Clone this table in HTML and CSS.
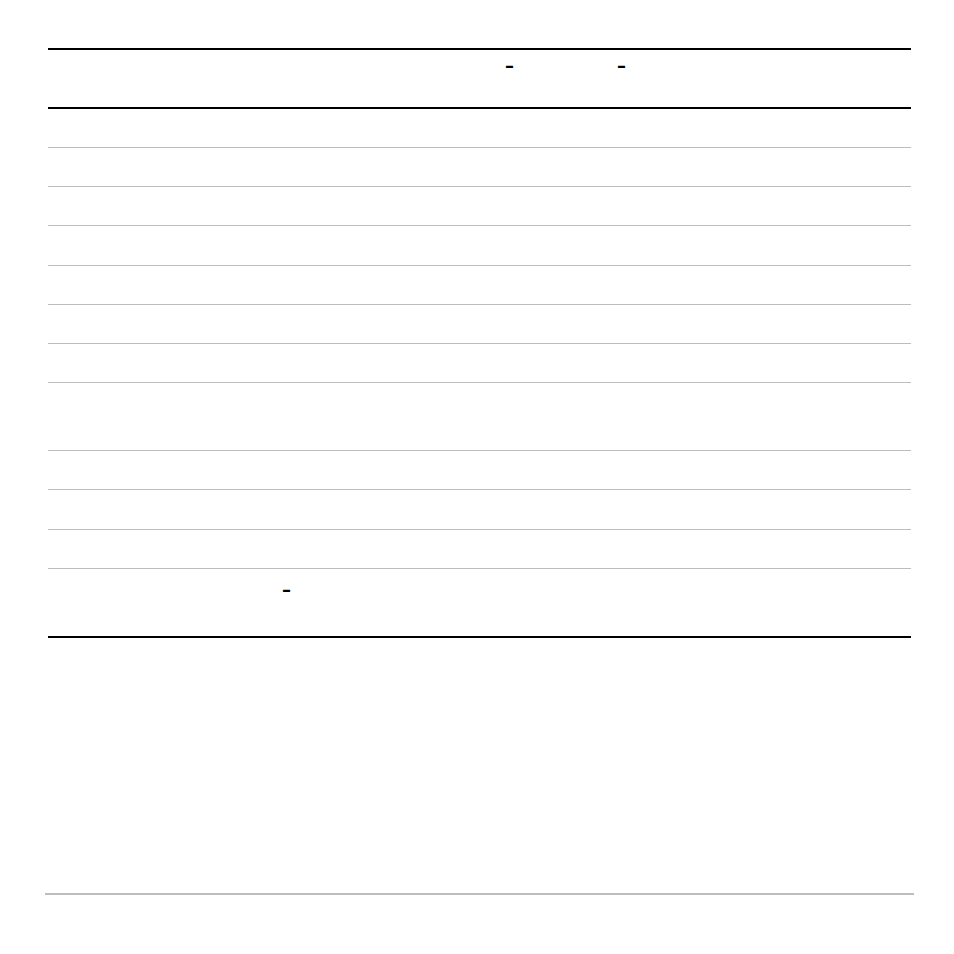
FILE: index.html
```html
<!DOCTYPE html>
<html>
<head>
<meta charset="utf-8">
<link rel="stylesheet" href="styles.css">
</head>
<body>
<div class="page">
  <div class="table">
    <div class="head">
      <span class="cell c1">–</span>
      <span class="cell c2">–</span>
    </div>
    <div class="row"></div>
    <div class="row"></div>
    <div class="row"></div>
    <div class="row"></div>
    <div class="row"></div>
    <div class="row"></div>
    <div class="row"></div>
    <div class="row tall"></div>
    <div class="row"></div>
    <div class="row"></div>
    <div class="row"></div>
    <div class="row tall last">
      <span class="cell c3">–</span>
    </div>
  </div>
  <div class="footer-rule"></div>
</div>
</body>
</html>
```
FILE: styles.css
```css
html, body {
  margin: 0;
  padding: 0;
  background: #fff;
}
body {
  font-family: "DejaVu Sans", "Liberation Sans", sans-serif;
  color: #000;
}
.page {
  width: 954px;
  height: 954px;
  box-sizing: border-box;
  padding-top: 48px;
}
.table {
  margin-left: 48px;
  width: 863px;
  border-top: 2px solid #000;
  border-bottom: 2px solid #000;
}
.head {
  height: 57px;
  border-bottom: 2px solid #000;
  display: grid;
  grid-template-columns: 457px 112px 1fr;
  align-items: start;
}
.cell {
  font-size: 18px;
  font-weight: bold;
  line-height: 18px;
  padding-top: 7px;
}
.c1 { grid-column: 2; }
.c2 { grid-column: 3; }
.row {
  height: 38.15px;
  border-bottom: 1px solid #bdbdbd;
  display: grid;
  grid-template-columns: 234px 1fr;
  align-items: start;
}
.row.tall { height: 67.3px; }
.row.last { border-bottom: none; height: 67.3px; }
.c3 { grid-column: 2; padding-top: 12px; }
.footer-rule {
  margin-top: 255px;
  margin-left: 45px;
  width: 869px;
  height: 2px;
  background: #bdbdbd;
}
```
